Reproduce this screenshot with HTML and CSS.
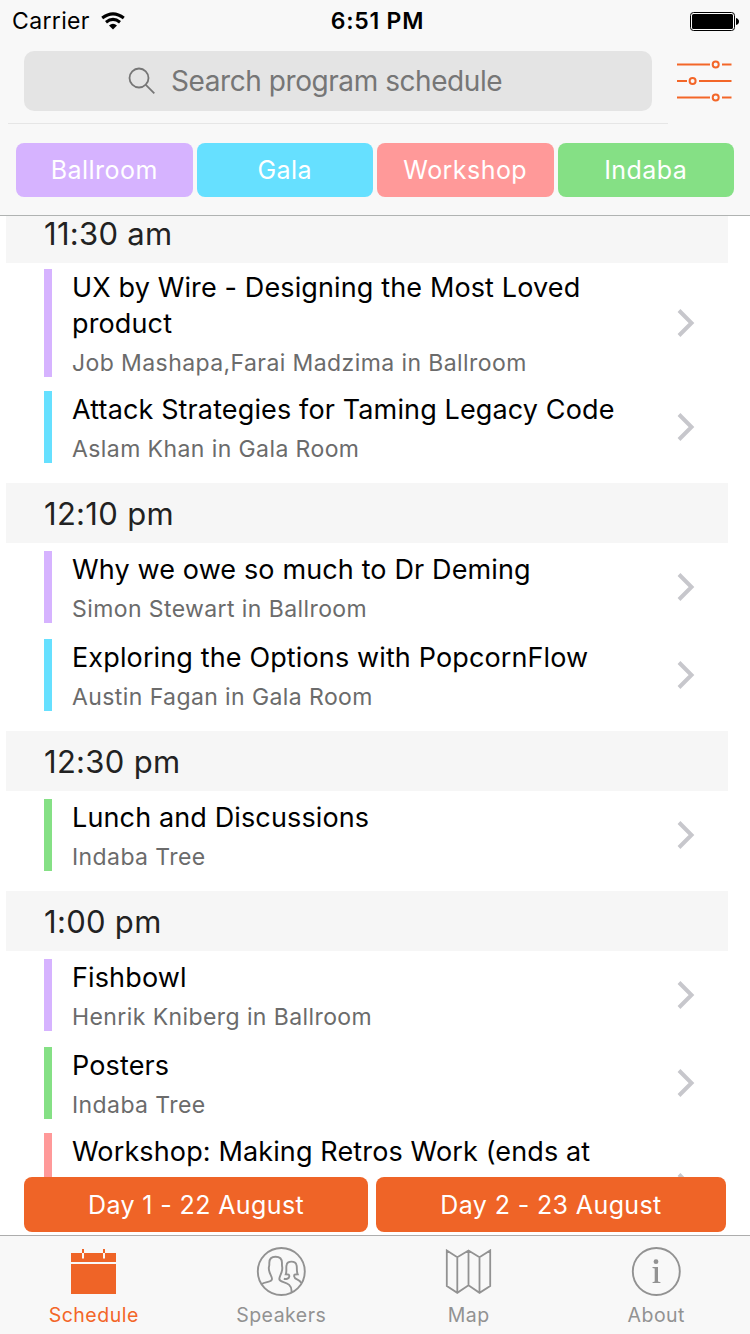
FILE: index.html
```html
<!DOCTYPE html>
<html lang="en">
<head>
<meta charset="utf-8">
<title>Program Schedule</title>
<link rel="stylesheet" href="styles.css">
</head>
<body>
<div class="app">
  <header class="header">
    <div class="status">
      <div class="status-left">
        <span class="carrier">Carrier</span>
        <svg class="wifi" width="24" height="18" viewBox="0 0 24 18">
          <g fill="none" stroke="#000" stroke-width="3.1">
            <path d="M1.2 6.1Q12 -2.2 22.8 6.1"/>
            <path d="M5 10.2Q12 4.6 19 10.2"/>
          </g>
          <path d="M8 13.4Q12 10.2 16 13.4L12 17.4Z"/>
        </svg>
      </div>
      <span class="clock">6:51 PM</span>
      <div class="status-right">
        <svg width="49" height="19" viewBox="0 0 49 19">
          <rect x=".5" y=".5" width="44" height="18" rx="3" fill="#fff" stroke="#000"/>
          <rect x="2" y="2" width="41" height="15" rx="1.5"/>
          <path d="M46 6Q49 7 49 9.500Q49 12 46 13Z"/>
        </svg>
      </div>
    </div>
    <div class="search-row">
      <div class="search">
        <svg width="28" height="28" viewBox="0 0 28 28" fill="none" stroke="#767676" stroke-width="1.800">
          <circle cx="11" cy="11" r="9.500"/>
          <path d="M17.800 17.800L26.300 26.300"/>
        </svg>
        <span class="placeholder">Search program schedule</span>
      </div>
      <svg class="filters" width="55" height="42" viewBox="0 0 55 42" fill="none" stroke="#f36628" stroke-width="2">
        <path d="M0 4.500H33M45 4.500H54.500M0 21H10M22 21H54.500M0 37.500H33M45 37.500H54.500"/>
        <circle cx="38.700" cy="4.500" r="3"/>
        <circle cx="15.600" cy="21" r="3"/>
        <circle cx="38.700" cy="37.500" r="3"/>
      </svg>
    </div>
    <div class="divider"></div>
    <div class="rooms">
      <div class="room ballroom">Ballroom</div>
      <div class="room gala">Gala</div>
      <div class="room workshop">Workshop</div>
      <div class="room indaba">Indaba</div>
    </div>
  </header>

  <main class="schedule">
    <section class="slot first">
      <h2 class="time">11:30 am</h2>
      <article class="talk tall">
        <i class="bar ballroom"></i>
        <div class="info"><h3>UX by Wire - Designing the Most Loved<br>product</h3><p>Job Mashapa,Farai Madzima in Ballroom</p></div>
        <svg class="chevron" viewBox="0 0 18 28"><path d="M2 1.500L14.500 14L2 26.500"/></svg>
      </article>
      <article class="talk">
        <i class="bar gala"></i>
        <div class="info"><h3>Attack Strategies for Taming Legacy Code</h3><p>Aslam Khan in Gala Room</p></div>
        <svg class="chevron" viewBox="0 0 18 28"><path d="M2 1.500L14.500 14L2 26.500"/></svg>
      </article>
    </section>
    <section class="slot">
      <h2 class="time">12:10 pm</h2>
      <article class="talk">
        <i class="bar ballroom"></i>
        <div class="info"><h3>Why we owe so much to Dr Deming</h3><p>Simon Stewart in Ballroom</p></div>
        <svg class="chevron" viewBox="0 0 18 28"><path d="M2 1.500L14.500 14L2 26.500"/></svg>
      </article>
      <article class="talk">
        <i class="bar gala"></i>
        <div class="info"><h3>Exploring the Options with PopcornFlow</h3><p>Austin Fagan in Gala Room</p></div>
        <svg class="chevron" viewBox="0 0 18 28"><path d="M2 1.500L14.500 14L2 26.500"/></svg>
      </article>
    </section>
    <section class="slot">
      <h2 class="time">12:30 pm</h2>
      <article class="talk">
        <i class="bar indaba"></i>
        <div class="info"><h3>Lunch and Discussions</h3><p>Indaba Tree</p></div>
        <svg class="chevron" viewBox="0 0 18 28"><path d="M2 1.500L14.500 14L2 26.500"/></svg>
      </article>
    </section>
    <section class="slot">
      <h2 class="time">1:00 pm</h2>
      <article class="talk">
        <i class="bar ballroom"></i>
        <div class="info"><h3>Fishbowl</h3><p>Henrik Kniberg in Ballroom</p></div>
        <svg class="chevron" viewBox="0 0 18 28"><path d="M2 1.500L14.500 14L2 26.500"/></svg>
      </article>
      <article class="talk">
        <i class="bar indaba"></i>
        <div class="info"><h3>Posters</h3><p>Indaba Tree</p></div>
        <svg class="chevron" viewBox="0 0 18 28"><path d="M2 1.500L14.500 14L2 26.500"/></svg>
      </article>
      <article class="talk tall">
        <i class="bar workshop"></i>
        <div class="info"><h3>Workshop: Making Retros Work (ends at<br>3:00</h3></div>
        <svg class="chevron" viewBox="0 0 18 28"><path d="M2 1.500L14.500 14L2 26.500"/></svg>
      </article>
    </section>
  </main>

  <div class="days">
    <div class="day day-one">Day 1 - 22 August</div>
    <div class="day day-two">Day 2 - 23 August</div>
  </div>

  <nav class="tabs">
    <div class="tab active">
      <svg width="50" height="50" viewBox="0 0 50 50">
        <path fill="#ef6427" d="M3 6H48V15H3ZM3 17H48V47H3Z"/>
        <path stroke="#ef6427" stroke-width="2" d="M15 2V6M36 2V6"/>
        <path stroke="#f8f8f8" stroke-width="2" d="M15 6V11.500M36 6V11.500"/>
      </svg>
      <span>Schedule</span>
    </div>
    <div class="tab">
      <svg width="50" height="50" viewBox="0 0 50 50" fill="none" stroke="#929292" stroke-width="1.900">
        <circle cx="25.300" cy="24.500" r="23.500"/>
        <path d="M5.800 37C9 34.500 16 35.500 16 32C16 29 12.800 26.500 12.800 21C12.800 19.500 13.500 19.500 13.300 16C13.300 11.500 16 9.800 19.500 9.800C23.500 9.800 26 12 26 16C25.800 19.500 26.300 19.500 26.300 21C26.300 26.500 23.300 28.500 23.300 32C23.300 36.500 36.500 33.500 35.500 45"/>
        <path d="M27.800 31.800C30 32.300 32.800 32 33.300 29.500C33.500 27.300 32.500 27.300 29.800 27.300C31 24.500 29.800 20.500 30.600 18C31.300 13.500 39.500 13.500 40.500 18C41.300 20.500 40.300 24.500 41.700 27.300C38.500 27.300 37.900 27.300 38.200 29.500C38.500 33 43.500 31.500 45.200 36"/>
      </svg>
      <span>Speakers</span>
    </div>
    <div class="tab">
      <svg width="50" height="50" viewBox="0 0 50 50" fill="none" stroke="#929292" stroke-width="1.800">
        <path d="M3.800 3.500L14.300 10.300L25.500 3.500L36.500 10.300L47.200 3.500V39L36.500 45.800L25.500 38.300L14.300 45.800L3.800 39ZM14.300 10.300V45.800M25.500 3.500V38.300M36.500 10.300V45.800"/>
      </svg>
      <span>Map</span>
    </div>
    <div class="tab">
      <svg width="50" height="50" viewBox="0 0 50 50">
        <circle cx="25.300" cy="24.500" r="23.500" fill="none" stroke="#929292" stroke-width="1.900"/>
        <circle cx="25" cy="14.700" r="2.400" fill="#929292"/>
        <path fill="#929292" d="M21.500 20H27V34.500L29.500 35.200V36H21.500V35.200L23.700 34.500V21.500L21.500 21Z"/>
      </svg>
      <span>About</span>
    </div>
  </nav>
</div>
</body>
</html>
```
FILE: styles.css
```css
* { box-sizing: border-box; margin: 0; padding: 0; }
body { font-family: Inter, "Liberation Sans", sans-serif; background: #fff; color: #000; }
svg { display: block; flex: none; }
.app { width: 750px; height: 1334px; display: flex; flex-direction: column; overflow: hidden; }

.header { flex: none; height: 216px; background: #f8f8f8; border-bottom: 1px solid #b0b3b2; }
.status { height: 40px; padding: 0 11px 0 12px; display: grid; grid-template-columns: 1fr auto 1fr; align-items: center; font-size: 23px; line-height: 42px; }
.status-left { display: flex; align-items: center; gap: 11px; }
.status-right { display: flex; justify-content: flex-end; }
.carrier { letter-spacing: .35px; }
.clock { font-weight: 600; letter-spacing: .75px; padding-left: 4px; }
.search-row { display: flex; padding: 11px 18px 0 24px; justify-content: space-between; align-items: center; }
.search { width: 628px; height: 60px; border-radius: 10px; background: #e4e4e4; display: flex; align-items: center; padding-left: 104px; gap: 15px; color: #767676; font-size: 28px; }
.placeholder { white-space: nowrap; letter-spacing: -.43px; }
.divider { height: 1px; width: 660px; margin: 12px 0 0 8px; background: #e6e6e6; }
.rooms { display: grid; grid-template-columns: repeat(4, 1fr); gap: 4px; padding: 19px 16px 0; }
.room { height: 54px; line-height: 54px; border-radius: 8px; text-align: center; color: #fff; font-size: 25px; letter-spacing: .45px; }
.ballroom { background: #d6b3ff; }
.gala { background: #66e0ff; }
.workshop { background: #ff9999; }
.indaba { background: #85e085; }

.schedule { height: 961px; flex: none; overflow: hidden; }
.slot { margin-bottom: 12px; }
.first { margin-top: -13px; }
.time { height: 60px; width: 722px; margin-left: 6px; padding-left: 38px; background: #f6f6f6; color: #222; font-size: 31px; font-weight: 400; line-height: 62px; letter-spacing: .3px; }
.talk { display: flex; height: 88px; padding: 8px 55px 8px 44px; align-items: center; }
.tall { height: 120px; padding-top: 6px; padding-bottom: 6px; }
.bar { width: 8px; align-self: stretch; margin-right: 20px; }
.info { flex: 1; align-self: stretch; white-space: nowrap; padding-top: 1px; }
.info h3 { font-size: 27px; font-weight: 400; line-height: 36px; letter-spacing: .13px; }
.info p { font-size: 23px; line-height: 36px; margin-top: 3px; color: #6b6b6b; letter-spacing: .41px; }
.chevron { width: 18px; height: 28px; fill: none; stroke: #c7c7cc; stroke-width: 4; }

.days { flex: none; height: 58px; display: flex; gap: 8px; padding: 0 24px; }
.day { height: 55px; line-height: 56px; border-radius: 8px; background: #ef6427; color: #fff; text-align: center; font-size: 25px; letter-spacing: .38px; }
.day-one { width: 344px; }
.day-two { width: 350px; }
.tabs { flex: none; height: 99px; border-top: 1px solid #adadad; background: #f8f8f8; display: grid; grid-template-columns: repeat(4, 1fr); }
.tab { display: flex; flex-direction: column; align-items: center; padding-top: 11px; color: #929292; font-size: 19.500px; line-height: 28px; letter-spacing: .5px; }
.tab svg { margin-right: 1px; }
.tab span { margin-top: 4px; }
.active { color: #f36628; }
```
